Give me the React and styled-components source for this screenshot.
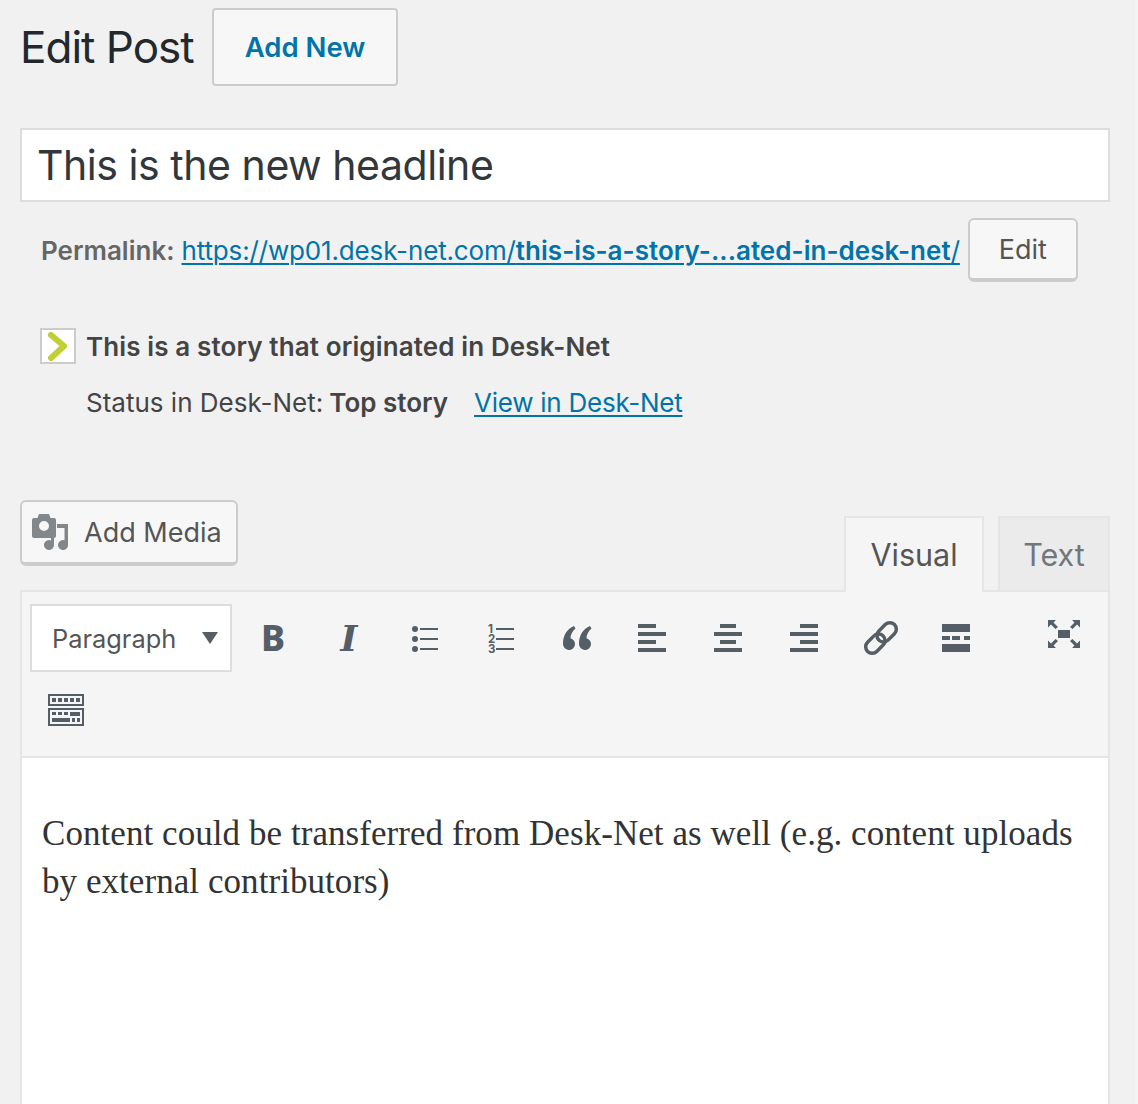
import React from 'react'
import styled, { createGlobalStyle } from 'styled-components'

const GlobalStyle = createGlobalStyle`
  html, body {
    margin: 0;
    padding: 0;
    background: #f1f1f1;
  }
  * {
    box-sizing: border-box;
  }
`

const Page = styled.div`
  width: 1138px;
  height: 1104px;
  overflow: hidden;
  padding: 8px 25px 0 20px;
  border-right: 3px solid #f4f4f4;
  background: #f1f1f1;
  font-family: Inter, "Liberation Sans", sans-serif;
  color: #444;
`

const Header = styled.div`
  display: flex;
  align-items: center;
  gap: 18px;
  height: 78px;
`

const Title = styled.h1`
  margin: 0;
  width: 174px;
  font-size: 44px;
  font-weight: 400;
  letter-spacing: -1px;
  white-space: nowrap;
  color: #23282d;
`

const AddNew = styled.a`
  display: flex;
  align-items: center;
  justify-content: center;
  width: 186px;
  height: 78px;
  border: 2px solid #ccc;
  border-radius: 4px;
  background: #f7f7f7;
  color: #0073aa;
  font-size: 27.5px;
  font-weight: 600;
`

const TitleBox = styled.div`
  display: flex;
  align-items: center;
  height: 74px;
  margin-top: 42px;
  padding-left: 15px;
  border: 2px solid #ddd;
  background: #fff;
  color: #32373c;
  font-size: 41px;
  letter-spacing: -0.45px;
`

const Permalink = styled.div`
  display: flex;
  align-items: center;
  height: 64px;
  margin-top: 16px;
  padding-left: 21px;
  font-size: 26px;
  color: #666;
  white-space: nowrap;
`

const Label = styled.strong`
  font-weight: 600;
  margin-right: 7px;
`

const Link = styled.a`
  color: #0073aa;
  text-decoration: underline;
  text-decoration-thickness: 2px;
  text-underline-offset: 3px;
  letter-spacing: ${p => (p.$bold ? '0.03px' : '-0.15px')};
  font-weight: ${p => (p.$bold ? 600 : 400)};
`

const Button = styled.a`
  display: flex;
  align-items: center;
  border: 2px solid #ccc;
  border-bottom-width: 4px;
  border-radius: 6px;
  background: #f7f7f7;
  color: #555;
`

const EditButton = styled(Button)`
  justify-content: center;
  width: 110px;
  height: 64px;
  margin-left: 8px;
  font-size: 27px;
`

const Story = styled.div`
  margin-top: 46px;
  margin-left: 20px;
  font-size: 26px;
`

const StoryRow = styled.div`
  display: flex;
  align-items: center;
  gap: 10px;
  color: #444;
  font-weight: 600;
  letter-spacing: 0.12px;
`

const ChevronBox = styled.span`
  display: flex;
  align-items: center;
  justify-content: center;
  width: 36px;
  height: 36px;
  border: 2px solid #ccc;
  background: #fff;
`

const StatusRow = styled.div`
  display: flex;
  margin-top: 20px;
  margin-left: 46px;
  height: 36px;
  align-items: center;
`

const StatusValue = styled.strong`
  font-weight: 600;
  margin-left: 6px;
  margin-right: 26px;
`

const StatusLink = styled(Link)`
  letter-spacing: -0.25px;
`

const EditorHead = styled.div`
  display: flex;
  justify-content: space-between;
  align-items: flex-end;
  height: 90px;
  margin-top: 80px;
`

const AddMedia = styled(Button)`
  align-self: flex-start;
  gap: 16px;
  width: 218px;
  height: 66px;
  padding-left: 10px;
  font-size: 27px;
`

const Tabs = styled.div`
  display: flex;
  gap: 14px;
  margin-bottom: -2px;
  position: relative;
`

const Tab = styled.div`
  display: flex;
  align-items: center;
  justify-content: center;
  width: ${p => (p.$active ? 140 : 112)}px;
  height: 76px;
  border: 2px solid #e5e5e5;
  border-bottom: ${p => (p.$active ? 'none' : '2px solid #e5e5e5')};
  padding-bottom: ${p => (p.$active ? 2 : 0)}px;
  background: ${p => (p.$active ? '#f5f5f5' : '#ebebeb')};
  color: ${p => (p.$active ? '#555' : '#72777c')};
  font-size: 30.5px;
`

const Toolbar = styled.div`
  display: flex;
  flex-wrap: wrap;
  align-items: center;
  row-gap: 18px;
  height: 168px;
  padding: 12px 6px 0 8px;
  border: 2px solid #e5e5e5;
  background: #f5f5f5;
  align-content: flex-start;
`

const Select = styled.div`
  display: flex;
  align-items: center;
  justify-content: space-between;
  width: 202px;
  height: 68px;
  margin-right: 3px;
  padding: 0 12px 0 20px;
  border: 2px solid #ddd;
  background: #fff;
  color: #555;
  font-size: 25.4px;
`

const Caret = styled.span`
  width: 0;
  height: 0;
  border-left: 8px solid transparent;
  border-right: 8px solid transparent;
  border-top: 12px solid #555d66;
`

const Slot = styled.div`
  display: flex;
  align-items: center;
  justify-content: center;
  width: 76px;
  height: 40px;
  color: #555d66;
`

const BoldMark = styled.span`
  font-family: "Noto Sans", sans-serif;
  font-weight: 800;
  font-size: 36px;
  line-height: 40px;
`

const ItalicMark = styled.span`
  font-family: "DejaVu Serif", serif;
  font-weight: 700;
  font-style: italic;
  font-size: 36px;
  line-height: 40px;
`

const Full = styled(Slot)`
  margin-left: auto;
`

const Keyboard = styled(Slot)`
  margin-left: -2px;
`

const Content = styled.div`
  height: 400px;
  padding: 52px 20px 0;
  border-left: 2px solid #e5e5e5;
  border-right: 2px solid #e5e5e5;
  background: #fff;
  color: #333;
  font-family: "Liberation Serif", serif;
  font-size: 35px;
  letter-spacing: 0.06px;
  line-height: 48px;
  white-space: nowrap;
`

const Icon = ({ children, size = 40, fill = '#555d66' }) => (
  <svg width={size} height={size} viewBox={`0 0 ${size} ${size}`} fill={fill}>{children}</svg>
)

const Bars = ({ rows }) => (
  <Icon>
    {rows.map(([x, w], i) => <rect key={i} x={x - 1} y={6 + i * 8} width={w} height="4" />)}
  </Icon>
)

const Lines = () => (
  <>
    {[11, 21, 31].map(y => <rect key={y} x="15" y={y - 1} width="18" height="2" />)}
  </>
)

const ChevronIcon = () => (
  <svg width="24" height="30" viewBox="0 0 24 30">
    <path d="M5 4 L18 15 L5 27" fill="none" stroke="#c0cf35" strokeWidth="6" strokeLinejoin="round" strokeLinecap="round" />
  </svg>
)

const MediaIcon = () => (
  <svg width="36" height="36" viewBox="0 0 36 36" fill="#82878c">
    <path fillRule="evenodd" d="M7 0 H17 L18.500 4 H22 A2 2 0 0 1 24 6 V22 A2 2 0 0 1 22 24 H2 A2 2 0 0 1 0 22 V6 A2 2 0 0 1 2 4 H5.500 Z M12 7 A5 5 0 1 0 12.001 17 A5 5 0 1 0 12 7 Z" />
    <path d="M25 10 H36 V31 A5 5 0 1 1 32.500 26.300 V14 H25 Z" />
    <path d="M19 24 H22 V31 A5 5 0 1 1 19 26.400 Z" />
  </svg>
)

const BulletList = () => (
  <Icon>
    {[11, 21, 31].map(y => <circle key={y} cx="10" cy={y} r="3" />)}
    <Lines />
  </Icon>
)

const NumberList = () => (
  <Icon>
    <text fontSize="11.5" fontWeight="700" fontFamily="Inter, sans-serif">
      {[1, 2, 3].map(n => <tspan key={n} x="7" y={5 + n * 10}>{n}</tspan>)}
    </text>
    <Lines />
  </Icon>
)

const Quote = () => (
  <Icon>
    <path d="M17 8 C10 11 6 17 6 26 A6 6 0 1 0 13.500 20.200 C13.500 16.500 15.500 13 18.500 10.500 Z" />
    <path d="M33 8 C26 11 22 17 22 26 A6 6 0 1 0 29.500 20.200 C29.500 16.500 31.500 13 34.500 10.500 Z" />
  </Icon>
)

const LinkIcon = () => (
  <Icon fill="none">
    <g transform="rotate(-45 20 20)" stroke="#555d66" strokeWidth="3.5">
      <rect x="1" y="13.500" width="22" height="13" rx="6.500" />
      <rect x="17" y="13.500" width="22" height="13" rx="6.500" />
    </g>
  </Icon>
)

const MoreIcon = () => (
  <Icon>
    <rect x="5" y="6" width="28" height="8" />
    <rect x="5" y="18" width="8" height="4" />
    <rect x="15" y="18" width="8" height="4" />
    <rect x="27" y="18" width="6" height="4" />
    <rect x="5" y="26" width="28" height="8" />
  </Icon>
)

const FullscreenIcon = () => (
  <Icon>
    <rect x="14" y="12" width="12" height="8" />
    <path d="M4 2 H12 L9.500 4.500 L14 9 L11.500 11 L7 6.500 L4 9.500 Z" />
    <path d="M36 2 H28 L30.500 4.500 L26 9 L28.500 11 L33 6.500 L36 9.500 Z" />
    <path d="M4 30 H12 L9.500 27.500 L14 23 L11.500 21 L7 25.500 L4 22.500 Z" />
    <path d="M36 30 H28 L30.500 27.500 L26 23 L28.500 21 L33 25.500 L36 22.500 Z" />
  </Icon>
)

const KeyboardIcon = () => (
  <Icon>
    <path fillRule="evenodd" d="M2 4 H38 V16 H2 Z M4 6 V14 H36 V6 Z" />
    <path fillRule="evenodd" d="M2 18 H38 V36 H2 Z M4 20 V34 H36 V20 Z" />
    {[6, 12, 18, 24, 30].map(x => <rect key={x} x={x} y="8" width="4" height="4" />)}
    {[6, 12, 18].map(x => <rect key={x} x={x} y="22" width="4" height="3" />)}
    <rect x="24" y="22" width="10" height="4" />
    <rect x="6" y="28" width="18" height="4" />
    <rect x="26" y="28" width="3" height="4" />
    <rect x="31" y="28" width="3" height="4" />
  </Icon>
)

const App = () => {
  return (
    <Page>
      <GlobalStyle />
      <Header>
        <Title>Edit Post</Title>
        <AddNew>Add New</AddNew>
      </Header>
      <TitleBox>This is the new headline</TitleBox>
      <Permalink>
        <Label>Permalink:</Label>
        <Link>https://wp01.desk-net.com/<Link as="span" $bold>this-is-a-story-...ated-in-desk-net</Link>/</Link>
        <EditButton>Edit</EditButton>
      </Permalink>
      <Story>
        <StoryRow>
          <ChevronBox><ChevronIcon /></ChevronBox>
          This is a story that originated in Desk-Net
        </StoryRow>
        <StatusRow>
          Status in Desk-Net:
          <StatusValue>Top story</StatusValue>
          <StatusLink>View in Desk-Net</StatusLink>
        </StatusRow>
      </Story>
      <EditorHead>
        <AddMedia><MediaIcon />Add Media</AddMedia>
        <Tabs>
          <Tab $active>Visual</Tab>
          <Tab>Text</Tab>
        </Tabs>
      </EditorHead>
      <Toolbar>
        <Select>Paragraph<Caret /></Select>
        <Slot><BoldMark>B</BoldMark></Slot>
        <Slot><ItalicMark>I</ItalicMark></Slot>
        <Slot><BulletList /></Slot>
        <Slot><NumberList /></Slot>
        <Slot><Quote /></Slot>
        <Slot><Bars rows={[[6, 18], [6, 28], [6, 18], [6, 28]]} /></Slot>
        <Slot><Bars rows={[[12, 16], [6, 28], [12, 16], [6, 28]]} /></Slot>
        <Slot><Bars rows={[[16, 18], [6, 28], [16, 18], [6, 28]]} /></Slot>
        <Slot><LinkIcon /></Slot>
        <Slot><MoreIcon /></Slot>
        <Full><FullscreenIcon /></Full>
        <Keyboard><KeyboardIcon /></Keyboard>
      </Toolbar>
      <Content>
        Content could be transferred from Desk-Net as well (e.g. content uploads<br />
        by external contributors)
      </Content>
    </Page>
  )
}

export default App
